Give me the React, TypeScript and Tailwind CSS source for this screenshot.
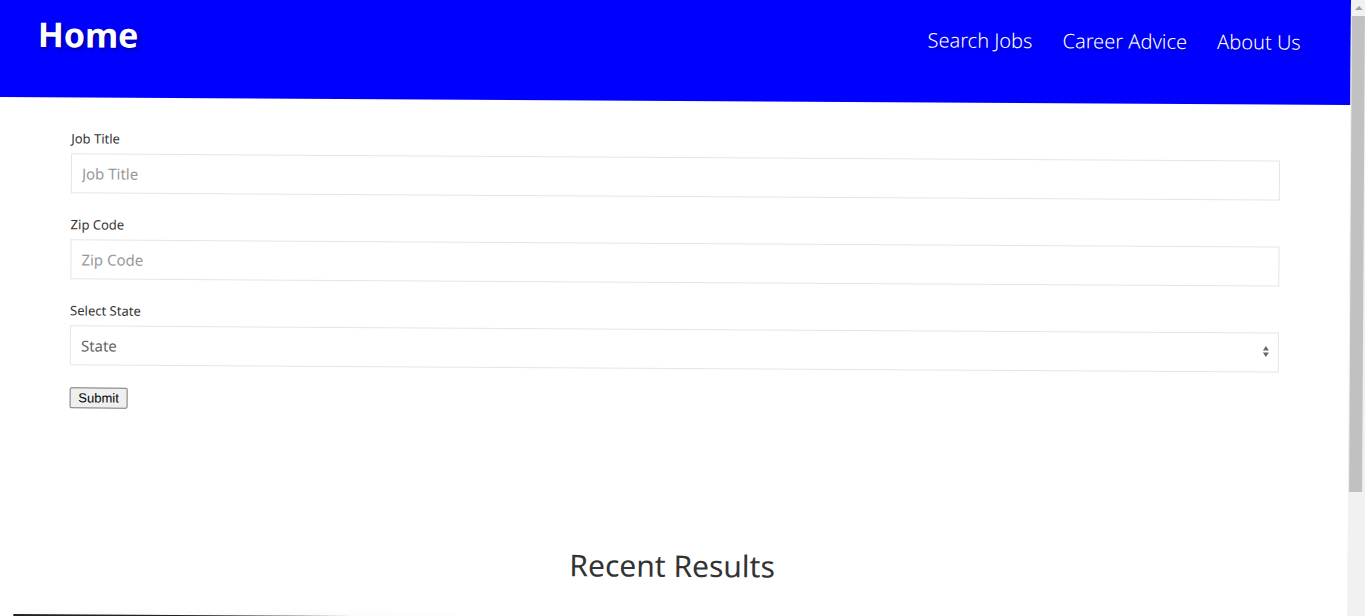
import React from "react";

const navLinks = ["Search Jobs", "Career Advice", "About Us"];

function Header() {
  return (
    <header className="flex h-[105px] items-start justify-between bg-[#0000ff] pt-4 pr-[50px] pl-[38px] text-white">
      <h1 className="text-[34px] leading-[52px] font-bold [text-shadow:2px_2px_4px_rgba(0,0,0,0.4)]">
        Home
      </h1>
      <nav className="flex gap-[30px] pt-[13px] text-[20px] leading-[28px] font-light [text-shadow:2px_2px_4px_rgba(0,0,0,0.3)]">
        {navLinks.map((label) => (
          <a key={label} href="#">
            {label}
          </a>
        ))}
      </nav>
    </header>
  );
}

function TextField({ id, label }: { id: string; label: string }) {
  return (
    <div>
      <label htmlFor={id} className="block pb-1 text-[13px] leading-[22px] text-[#333]">
        {label}
      </label>
      <input
        id={id}
        type="text"
        placeholder={label}
        className="block h-10 w-full border border-[#e5e5e5] bg-white px-[10px] text-[15px] text-[#666] placeholder:text-[#999]"
      />
    </div>
  );
}

function SearchForm() {
  return (
    <form className="flex flex-col gap-5 pt-[30px] pr-[70px] pl-[72px]">
      <TextField id="job-title" label="Job Title" />
      <TextField id="zip-code" label="Zip Code" />
      <div>
        <label htmlFor="state" className="block pb-1 text-[13px] leading-[22px] text-[#333]">
          Select State
        </label>
        <div className="relative">
          <select
            id="state"
            className="block h-10 w-full appearance-none border border-[#e5e5e5] bg-white px-[10px] text-[15px] text-[#666]"
          >
            <option>State</option>
          </select>
          <svg
            viewBox="0 0 6 12"
            className="pointer-events-none absolute top-[13px] right-[10px] h-3 w-[6px]"
            fill="#666"
            aria-hidden="true"
          >
            <path d="M3 0.5 6 5H0Z M0 7h6L3 11.5Z" />
          </svg>
        </div>
      </div>
      <button
        type="button"
        className="mt-[2px] h-[21px] w-[58px] rounded-[2px] border border-[#767676] bg-[#efefef] font-['Liberation_Sans',sans-serif] text-[13px] leading-[19px] text-black"
      >
        Submit
      </button>
    </form>
  );
}

function ScrollBar() {
  return (
    <div className="flex w-[14px] shrink-0 flex-col bg-[#f1f1f1] pl-[1px]" aria-hidden="true">
      <div className="flex h-4 items-center justify-center">
        <svg viewBox="0 0 8 4" className="h-1 w-2" fill="#a3a3a3">
          <path d="M4 0 8 4H0Z" />
        </svg>
      </div>
      <div className="h-[476px] w-[13px] bg-[#c1c1c1]" />
    </div>
  );
}

export default function App() {
  return (
    <div className="h-screen overflow-hidden bg-[#f1f1f1] font-['Noto_Sans','Open_Sans',sans-serif]">
      <div className="flex origin-top-right rotate-[0.34deg]">
        <div className="min-w-0 grow bg-white">
          <Header />
          <main>
            <SearchForm />
            <section className="pt-[130px]">
              <h2 className="text-center text-[30px] leading-[48px] text-[#333]">Recent Results</h2>
              <div className="px-[17px] pt-7 pb-6">
                <div className="h-60 w-[440px] bg-[#222] shadow-[0_0_8px_rgba(0,0,0,0.04)]" />
              </div>
            </section>
          </main>
        </div>
        <ScrollBar />
      </div>
    </div>
  );
}
